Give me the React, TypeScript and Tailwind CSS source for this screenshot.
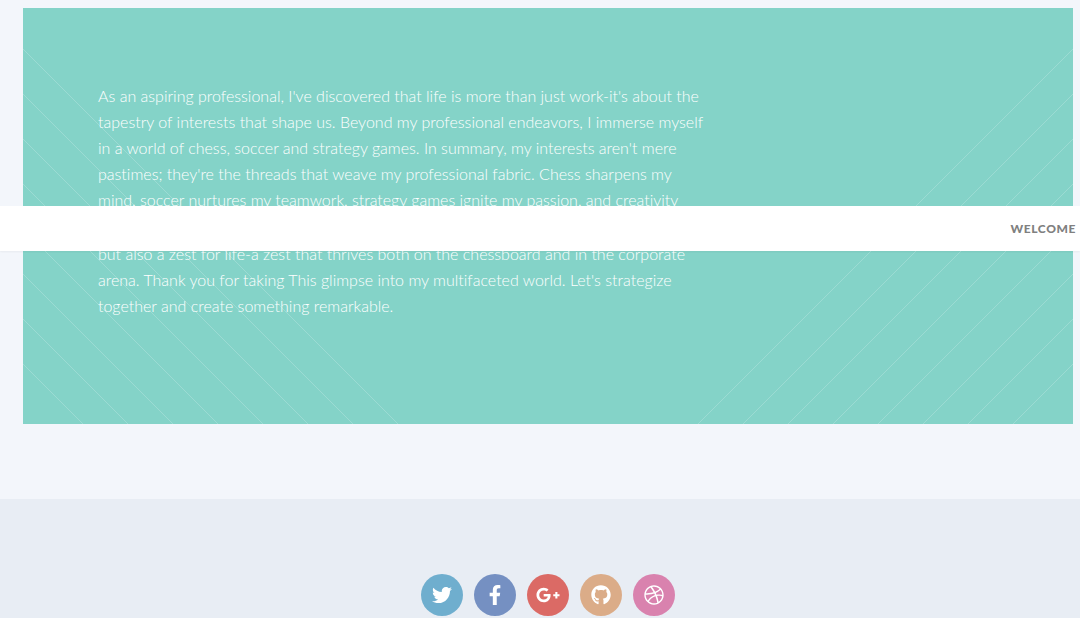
import React from "react";
import { FaTwitter, FaFacebookF, FaGooglePlusG, FaGithub, FaDribbble } from "react-icons/fa";

const offsets = [0, 45, 90, 135, 180, 225, 270, 315];

const socials = [
  { label: "Twitter", color: "bg-[#6faece]", Icon: FaTwitter, size: 20 },
  { label: "Facebook", color: "bg-[#7590c2]", Icon: FaFacebookF, size: 20 },
  { label: "Google Plus", color: "bg-[#db6a65]", Icon: FaGooglePlusG, size: 24 },
  { label: "GitHub", color: "bg-[#dbac88]", Icon: FaGithub, size: 20 },
  { label: "Dribbble", color: "bg-[#d982ae]", Icon: FaDribbble, size: 20 },
];

function Stripes({ className }: { className: string }) {
  return (
    <svg
      className={className}
      width="375"
      height="375"
      viewBox="0 0 375 375"
      stroke="#fff"
      strokeOpacity="0.2"
      aria-hidden="true"
    >
      {offsets.map((o) => (
        <path key={o} d={`M0 ${o}L${375 - o} 375`} />
      ))}
    </svg>
  );
}

export default function App() {
  return (
    <div className="relative flex min-h-screen flex-col bg-[#f3f6fb] font-['Lato',sans-serif]">
      <nav
        aria-label="Main"
        className="absolute inset-x-0 top-[206px] z-10 flex h-[45px] items-center justify-end bg-white pr-1 shadow-xs"
      >
        <a href="#welcome" className="text-[12px] leading-4 font-black tracking-wider text-[#808080]">
          WELCOME
        </a>
      </nav>
      <main id="welcome" className="pt-2 pr-[7px] pb-[75px] pl-[23px]">
        <section className="relative overflow-hidden bg-[#84d3c8] px-[75px] pt-[75px] pb-[105px]">
          <Stripes className="absolute bottom-0 left-0" />
          <Stripes className="absolute right-0 bottom-0 -scale-x-100" />
          <div className="relative flex max-w-[620px] flex-col gap-[28px] text-[16px] leading-[26px] font-light text-white [font-variant-ligatures:none]">
            <p>
              As an aspiring professional, I've discovered that life is more than just work-it's about the
              <br />
              tapestry of interests that shape us. Beyond my professional endeavors, I immerse myself
              <br />
              in a world of chess, soccer and strategy games. In summary, my interests aren't mere
              <br />
              pastimes; they're the threads that weave my professional fabric. Chess sharpens my
              <br />
              mind, soccer nurtures my teamwork, strategy games ignite my passion, and creativity
            </p>
            <p>
              but also a zest for life-a zest that thrives both on the chessboard and in the corporate
              <br />
              arena. Thank you for taking This glimpse into my multifaceted world. Let's strategize
              <br />
              together and create something remarkable.
            </p>
          </div>
        </section>
      </main>
      <footer className="grow bg-[#e8edf4] pt-[75px] pr-[7px] pl-[23px]">
        <ul className="flex justify-center gap-[11px]">
          {socials.map(({ label, color, Icon, size }) => (
            <li key={label}>
              <a
                href="#welcome"
                aria-label={label}
                className={`flex size-[42px] items-center justify-center rounded-full text-white ${color}`}
              >
                <Icon size={size} />
              </a>
            </li>
          ))}
        </ul>
      </footer>
    </div>
  );
}
